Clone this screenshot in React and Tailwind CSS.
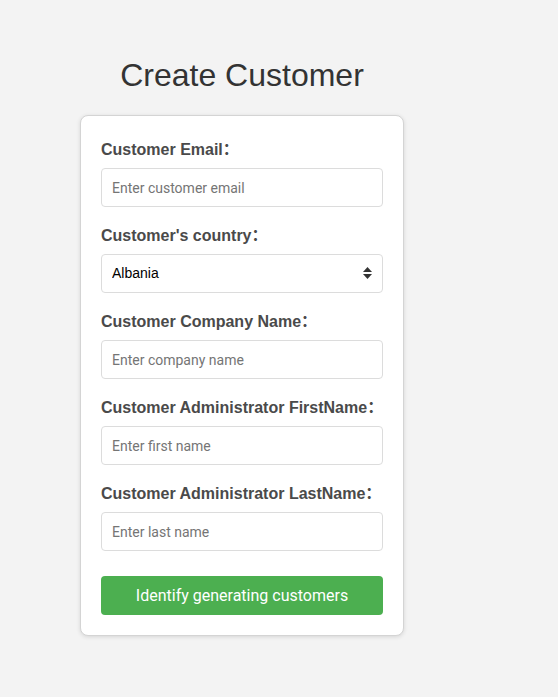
import React from "react";

function Field({ label, children, last }) {
  return (
    <div className={last ? "mb-[25px]" : "mb-[20px]"}>
      <label className="block h-[18px] whitespace-nowrap mb-[9px] text-[16px] leading-[18px] font-bold text-[#4a4a4a] font-['Liberation_Sans',Arial,sans-serif]">
        {label}
        <span className="leading-[0] align-baseline font-['Noto_Sans_CJK_SC',sans-serif]">：</span>
      </label>
      {children}
    </div>
  );
}

function TextInput({ placeholder }) {
  return (
    <input
      type="text"
      placeholder={placeholder}
      className="block w-full h-[39px] px-[10px] border border-[#dcdcdc] rounded-[4px] bg-white text-[14px] text-black placeholder:text-[#757575] outline-none font-['Roboto',sans-serif]"
    />
  );
}

export default function App() {
  return (
    <div className="min-h-[697px] w-full bg-[#f3f3f3] pl-[80px] pt-[57px]">
      <div className="w-[324px]">
        <h1 className="text-center text-[32px] leading-[37px] text-[#333] mb-[21px] font-['Liberation_Sans',Arial,sans-serif]">
          Create Customer
        </h1>
        <div className="flex flex-col bg-white border border-[#d4d4d4] rounded-[8px] shadow-[0_1px_4px_rgba(0,0,0,0.12)] px-[20px] pt-[25px] pb-[20px]">
          <Field label="Customer Email">
            <TextInput placeholder="Enter customer email" />
          </Field>
          <Field label="Customer's country">
            <div className="relative">
              <select
                className="block w-full h-[39px] pl-[10px] pr-[30px] border border-[#dcdcdc] rounded-[4px] bg-white text-[14px] text-black appearance-none outline-none font-['Liberation_Sans',Arial,sans-serif]"
                defaultValue="Albania"
              >
                <option>Albania</option>
              </select>
              <svg className="absolute right-[10px] top-[12px] pointer-events-none" width="11" height="14" viewBox="0 0 11 14">
                <path d="M5.5 1 L10 6 L1 6 Z" fill="#333" />
                <path d="M5.5 13 L10 8 L1 8 Z" fill="#333" />
              </svg>
            </div>
          </Field>
          <Field label="Customer Company Name">
            <TextInput placeholder="Enter company name" />
          </Field>
          <Field label="Customer Administrator FirstName">
            <TextInput placeholder="Enter first name" />
          </Field>
          <Field label="Customer Administrator LastName" last>
            <TextInput placeholder="Enter last name" />
          </Field>
          <button className="block w-full h-[39px] rounded-[4px] bg-[#4caf50] text-white text-[16px] font-['Roboto',sans-serif]">
            Identify generating customers
          </button>
        </div>
      </div>
    </div>
  );
}
